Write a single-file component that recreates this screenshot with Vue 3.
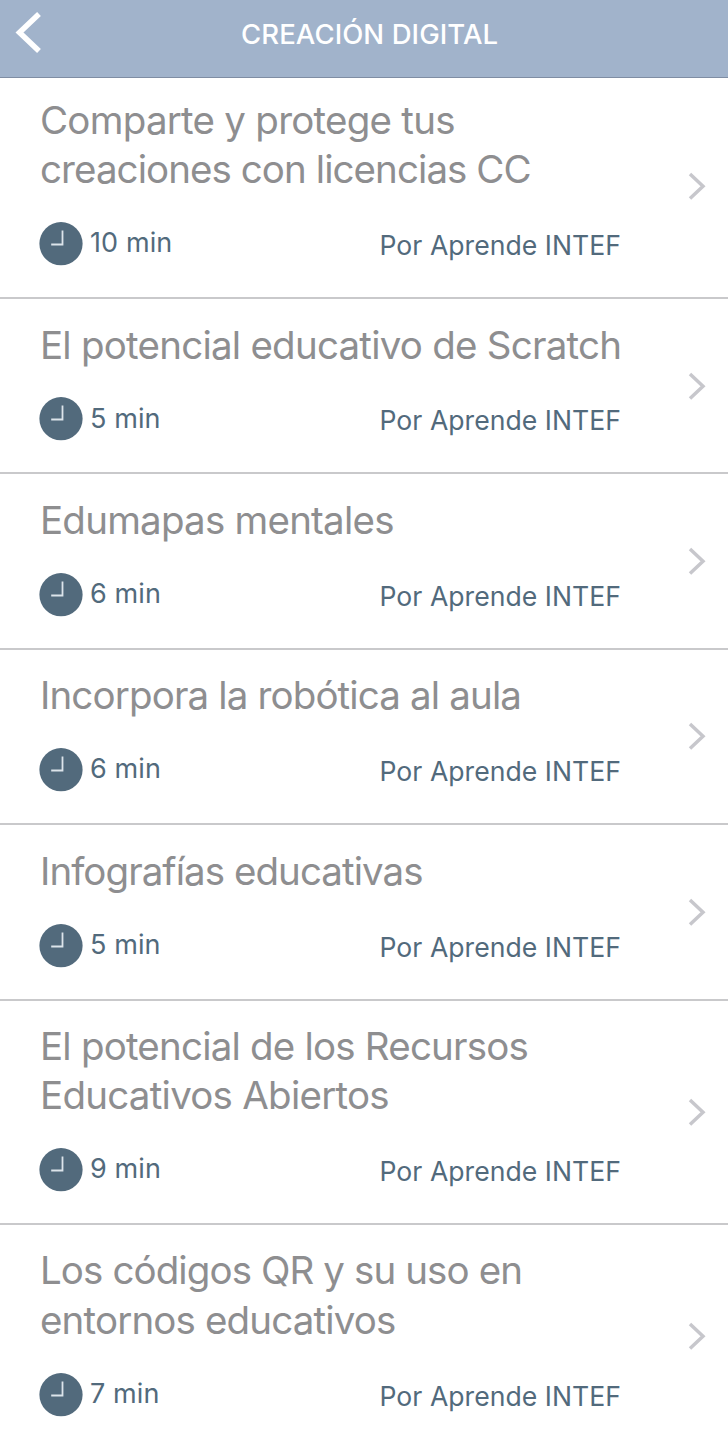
<script setup>
// Each title line carries its own letter tracking in pixels.
const items = [
  { lines: [['Comparte y protege tus', -0.75], ['creaciones con licencias CC', -0.93]], time: '10 min' },
  { lines: [['El potencial educativo de Scratch', -0.77]], time: '5 min' },
  { lines: [['Edumapas mentales', -0.78]], time: '6 min' },
  { lines: [['Incorpora la robótica al aula', -0.86]], time: '6 min' },
  { lines: [['Infografías educativas', -0.95]], time: '5 min' },
  { lines: [['El potencial de los Recursos', -0.8], ['Educativos Abiertos', -0.75]], time: '9 min' },
  { lines: [['Los códigos QR y su uso en', -0.9], ['entornos educativos', -0.84]], time: '7 min' },
]
</script>

<template>
  <main class="screen">
    <header class="bar">
      <svg class="back" width="28" height="42" viewBox="0 0 28 42"><path d="M24 2 L4.500 20.500 L24 39" fill="none" stroke="#fff" stroke-width="5.500" /></svg>
      <h1>CREACIÓN DIGITAL</h1>
    </header>
    <article v-for="item in items" :key="item.lines[0][0]" class="row" :class="{ tall: item.lines.length > 1 }">
      <div class="content">
        <h2><span v-for="line in item.lines" :key="line[0]" :style="{ letterSpacing: line[1] + 'px' }">{{ line[0] }}</span></h2>
        <div class="meta">
          <svg class="clock" width="44" height="44" viewBox="0 0 44 44"><circle cx="22" cy="21.700" r="21.600" fill="#526a7c" /><path d="M23.500 8.500 V22.500 H12.200" fill="none" stroke="#dce4ea" stroke-width="1.800" /></svg>
          <span class="time">{{ item.time }}</span>
          <span class="author">Por Aprende INTEF</span>
        </div>
      </div>
      <svg class="next" width="20" height="30" viewBox="0 0 20 30"><path d="M3 3 L16 15.300 L3 27.600" fill="none" stroke="#c7c7cc" stroke-width="3.500" /></svg>
    </article>
  </main>
</template>

<style scoped>
.screen { height: 1431px; overflow: hidden; background: #fff; font-family: Inter, "Liberation Sans", sans-serif; }
.bar { box-sizing: border-box; height: 78px; background: #a1b3cb; border-bottom: 1px solid #7f8da3; display: flex; padding-top: 12px; }
.back { margin-left: 15px; flex: none; }
h1 { margin: 7px 0 0 198px; font-size: 27.5px; line-height: 30px; font-weight: 500; letter-spacing: 0.08px; color: #fff; white-space: nowrap; }
.row { box-sizing: border-box; height: 175.4px; border-bottom: 2px solid #c9c9cb; display: flex; align-items: center; justify-content: space-between; padding: 0 21px 0 39px; }
.row.tall { height: 224.6px; }
.row.tall:nth-child(2) { height: 221px; }
.row:nth-child(2) .next { margin-bottom: 4px; }
.content { align-self: flex-end; padding-bottom: 31px; }
h2 { margin: 0 0 27.3px 1px; color: #8e8e90; font-size: 38.5px; line-height: 49.5px; font-weight: 400; }
h2 span { display: block; white-space: nowrap; }
.meta { display: flex; height: 44px; align-items: center; color: #526a7c; font-size: 26.6px; line-height: 32px; white-space: nowrap; }
.clock { flex: none; }
.time { width: 289.5px; margin-left: 7px; padding-bottom: 1.4px; font-size: 27px; letter-spacing: 0.1px; }
.author { padding-top: 2px; letter-spacing: 0.03px; }
</style>
